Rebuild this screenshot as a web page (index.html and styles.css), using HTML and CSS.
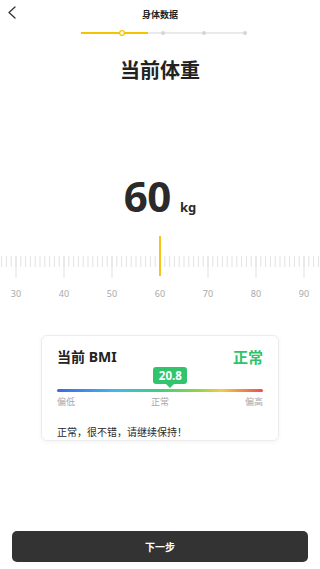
FILE: index.html
```html
<!DOCTYPE html>
<html lang="zh-CN">
<head>
<meta charset="utf-8">
<meta name="viewport" content="width=device-width, initial-scale=1">
<title>身体数据</title>
<link rel="stylesheet" href="styles.css">
</head>
<body>
<div class="page">
  <header class="header">
    <svg class="back" width="20" height="30" viewBox="0 0 20 30"><polyline points="15,7 9,12.5 15,18" fill="none" stroke="#333" stroke-width="1.3" stroke-linecap="round" stroke-linejoin="round"/></svg>
    <div class="title">身体数据</div>
    <span></span>
  </header>
  <svg class="steps" width="320" height="8" viewBox="0 0 320 8">
    <line x1="148" y1="4" x2="245" y2="4" stroke="#e3e3e3" stroke-width="1.5"/>
    <line x1="81" y1="4" x2="148" y2="4" stroke="#f5c400" stroke-width="2"/>
    <circle cx="163" cy="4" r="2" fill="#d6d6d6"/>
    <circle cx="204" cy="4" r="2" fill="#d6d6d6"/>
    <circle cx="245" cy="4" r="2" fill="#d6d6d6"/>
    <circle cx="122" cy="4" r="2.4" fill="#fff" stroke="#f5c400" stroke-width="1.2"/>
  </svg>

  <h1 class="heading">当前体重</h1>

  <div class="weight">
    <span class="weight-value">60</span>
    <span class="weight-unit">kg</span>
  </div>

  <svg class="ruler" width="320" height="70" viewBox="0 0 320 70">
    <defs>
      <pattern id="tick" x="15.5" y="0" width="4.8" height="70" patternUnits="userSpaceOnUse">
        <rect x="0" y="22" width="1" height="11" fill="#e2e2e2"/>
      </pattern>
    </defs>
    <rect x="0" y="0" width="320" height="70" fill="url(#tick)"/>
    <g fill="#e2e2e2">
      <rect x="15.5" y="22" width="1" height="22"/>
      <rect x="63.5" y="22" width="1" height="22"/>
      <rect x="111.5" y="22" width="1" height="22"/>
      <rect x="207.5" y="22" width="1" height="22"/>
      <rect x="255.5" y="22" width="1" height="22"/>
      <rect x="303.5" y="22" width="1" height="22"/>
    </g>
    <rect x="159" y="2" width="2" height="40" fill="#f5c518"/>
    <g class="ruler-labels" fill="#a8a8a8" font-size="9" text-anchor="middle">
      <text x="16" y="63">30</text>
      <text x="64" y="63">40</text>
      <text x="112" y="63">50</text>
      <text x="160" y="63">60</text>
      <text x="208" y="63">70</text>
      <text x="256" y="63">80</text>
      <text x="304" y="63">90</text>
    </g>
  </svg>

  <section class="card">
    <div class="card-head">
      <span class="card-title">当前 BMI</span>
      <span class="card-status">正常</span>
    </div>
    <div class="marker-track">
      <div class="marker" style="left: 55%;">20.8</div>
    </div>
    <div class="scale-bar"></div>
    <div class="scale-labels">
      <span>偏低</span><span>正常</span><span>偏高</span>
    </div>
    <p class="advice">正常，很不错，请继续保持！</p>
  </section>

  <button class="next">下一步</button>
</div>
</body>
</html>
```

FILE: styles.css
```css
* { box-sizing: border-box; }
html, body { margin: 0; padding: 0; background: #fff; }
body {
  font-family: "Noto Sans", "Noto Sans CJK SC", sans-serif;
  color: #222;
}
.page {
  width: 320px;
  height: 569px;
  display: flex;
  flex-direction: column;
  overflow: hidden;
}
.header {
  height: 30px;
  display: grid;
  grid-template-columns: 40px 1fr 40px;
  align-items: center;
}
.back { display: block; }
.title {
  text-align: center;
  font-size: 9px;
  font-weight: 700;
  line-height: 12px;
  color: #222;
}
.steps { display: block; margin-top: -1px; }
.heading {
  margin: 22px 0 0;
  text-align: center;
  font-size: 20px;
  line-height: 24px;
  font-weight: 700;
  color: #222;
}
.weight {
  margin-top: 88px;
  height: 50px;
  display: flex;
  justify-content: center;
  align-items: baseline;
  gap: 9px;
  line-height: 50px;
}
.weight-value {
  font-size: 42px;
  font-weight: 700;
  color: #2a2a2a;
  letter-spacing: -0.5px;
}
.weight-unit {
  font-size: 13px;
  font-weight: 700;
  color: #2a2a2a;
}
.ruler { display: block; margin-top: 13px; }
.ruler-labels { font-family: "Noto Sans", sans-serif; }
.card {
  margin: 31px 41px 0;
  border: 1px solid #ececec;
  border-radius: 6px;
  box-shadow: 0 1px 4px rgba(0,0,0,0.05);
  padding: 10px 15px 1px;
}
.card-head {
  height: 20px;
  display: flex;
  justify-content: space-between;
  align-items: center;
}
.card-title {
  font-size: 14px;
  font-weight: 700;
  color: #222;
}
.card-status {
  font-size: 15px;
  font-weight: 700;
  color: #2cc36b;
}
.marker-track {
  position: relative;
  height: 23px;
}
.marker {
  position: absolute;
  top: 1px;
  transform: translateX(-50%);
  width: 34px;
  height: 17px;
  border-radius: 3px;
  background: #31c46d;
  color: #fff;
  font-size: 11.5px;
  font-weight: 700;
  line-height: 17px;
  text-align: center;
}
.marker::after {
  content: "";
  position: absolute;
  left: 50%;
  bottom: -4px;
  margin-left: -4px;
  border-left: 4px solid transparent;
  border-right: 4px solid transparent;
  border-top: 4px solid #31c46d;
}
.scale-bar {
  height: 3px;
  border-radius: 2px;
  background: linear-gradient(90deg, #3a67e6 0%, #40b8ec 28%, #3fd07a 50%, #8fd34a 68%, #f2cc45 80%, #f08a45 90%, #ec4f4f 100%);
}
.scale-labels {
  margin-top: 3px;
  display: flex;
  justify-content: space-between;
  font-size: 9px;
  line-height: 14px;
  color: #a8a8a8;
}
.advice {
  margin: 16px 0 0;
  font-size: 10px;
  line-height: 14px;
  color: #2a2a2a;
}
.next {
  margin: auto 12px 7px;
  height: 31px;
  border: none;
  border-radius: 5px;
  background: #333;
  color: #fff;
  font-family: "Noto Sans CJK SC", sans-serif;
  font-size: 10px;
  font-weight: 700;
}
```
